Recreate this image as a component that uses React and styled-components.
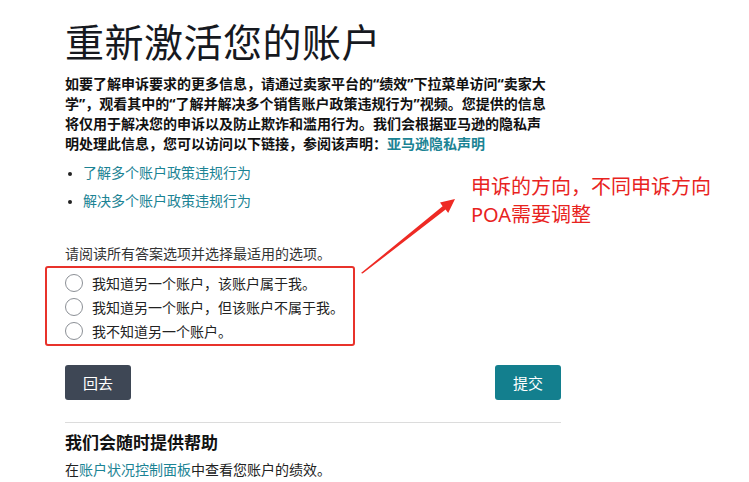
import styled, { createGlobalStyle } from "styled-components";

const GlobalStyle = createGlobalStyle`
	html, body {
		margin: 0;
		padding: 0;
		background: #fff;
	}
	body {
		font-family: "Noto Sans", "Noto Sans CJK SC", sans-serif;
		color: #0f1111;
	}
`;

const options = [
	"我知道另一个账户，该账户属于我。",
	"我知道另一个账户，但该账户不属于我。",
	"我不知道另一个账户。",
];

export default function App() {
	return (
		<Screen>
			<GlobalStyle />
			<Page>
				<Title>重新激活您的账户</Title>
				<Intro>
					如要了解申诉要求的更多信息，请通过卖家平台的“绩效”下拉菜单访问“卖家大
					<br />
					学”，观看其中的“了解并解决多个销售账户政策违规行为”视频。您提供的信息
					<br />
					将仅用于解决您的申诉以及防止欺诈和滥用行为。我们会根据亚马逊的隐私声
					<br />
					明处理此信息，您可以访问以下链接，参阅该声明：
					<Link href="#">亚马逊隐私声明</Link>
				</Intro>
				<Bullets>
					<li>
						<PlainLink href="#">了解多个账户政策违规行为</PlainLink>
					</li>
					<li>
						<PlainLink href="#">解决多个账户政策违规行为</PlainLink>
					</li>
				</Bullets>
				<Prompt>请阅读所有答案选项并选择最适用的选项。</Prompt>
				<Highlight>
					{options.map((label) => (
						<Option key={label}>
							<Radio />
							<span>{label}</span>
						</Option>
					))}
				</Highlight>
				<Actions>
					<Button>回去</Button>
					<Button $primary>提交</Button>
				</Actions>
				<Divider />
				<HelpTitle>我们会随时提供帮助</HelpTitle>
				<HelpText>
					在<PlainLink href="#">账户状况控制面板</PlainLink>中查看您账户的绩效。
				</HelpText>
			</Page>

			<Arrow viewBox="0 0 749 482" width="749" height="482">
				<polygon
					points="361,273 442.6,206.3 440,202.5 455,199 448.2,213 445.6,209.6 362.6,273.6"
					fill="#ee2a24"
				/>
			</Arrow>
			<Note>
				申诉的方向，不同申诉方向
				<br />
				POA需要调整
			</Note>
		</Screen>
	);
}

const Screen = styled.div`
	position: relative;
	width: 749px;
	height: 482px;
	overflow: hidden;
`;

const Page = styled.main`
	width: 496px;
	padding: 18px 0 0 65px;
`;

const Title = styled.h1`
	margin: 0;
	font-size: 39px;
	line-height: 48px;
	font-weight: 400;
	color: #16191f;
	letter-spacing: 0.5px;
`;

const Intro = styled.p`
	margin: 8px 0 0;
	width: 520px;
	font-size: 14px;
	line-height: 20px;
	font-weight: 700;
	color: #111;
	white-space: nowrap;
`;

const Link = styled.a`
	color: #1b8394;
	text-decoration: none;
`;

const PlainLink = styled(Link)`
	font-weight: 400;
`;

const Bullets = styled.ul`
	margin: 9px 0 0;
	padding-left: 18px;
	font-size: 14px;
	line-height: 20px;

	li + li {
		margin-top: 8px;
	}
	li::marker {
		color: #222;
		font-size: 12px;
	}
`;

const Prompt = styled.p`
	margin: 33px 0 0;
	font-size: 14px;
	line-height: 20px;
	color: #333;
`;

const Highlight = styled.div`
	box-sizing: border-box;
	margin: 2px 0 0 -20px;
	width: 310px;
	padding: 3px 0 1px 18px;
	border: 2px solid #e8322b;
	border-radius: 3px;
`;

const Option = styled.label`
	display: flex;
	align-items: center;
	gap: 9px;
	height: 24px;
	font-size: 14px;
	color: #222;
	white-space: nowrap;
`;

const Radio = styled.span`
	width: 16px;
	height: 16px;
	border-radius: 50%;
	border: 1px solid #8c9096;
	background: #fff;
	flex: none;
`;

const Actions = styled.div`
	display: flex;
	justify-content: space-between;
	margin-top: 19px;
`;

const Button = styled.button`
	height: 35px;
	padding: 0 18px;
	border: none;
	border-radius: 3px;
	font-family: inherit;
	font-size: 15px;
	color: #fff;
	background: ${(p) => (p.$primary ? "#137f8e" : "#3e4755")};
	cursor: pointer;
`;

const Divider = styled.hr`
	margin: 22px 0 0;
	border: none;
	border-top: 1px solid #dcdcdc;
`;

const HelpTitle = styled.h2`
	margin: 8px 0 0;
	font-size: 17px;
	line-height: 24px;
	font-weight: 700;
	color: #111;
`;

const HelpText = styled.p`
	margin: 5px 0 0;
	font-size: 14px;
	line-height: 20px;
	color: #222;
`;

const Arrow = styled.svg`
	position: absolute;
	left: 0;
	top: 0;
	pointer-events: none;
`;

const Note = styled.div`
	position: absolute;
	left: 471px;
	top: 173px;
	font-size: 20px;
	line-height: 28px;
	color: #e8231e;
	white-space: nowrap;
`;
